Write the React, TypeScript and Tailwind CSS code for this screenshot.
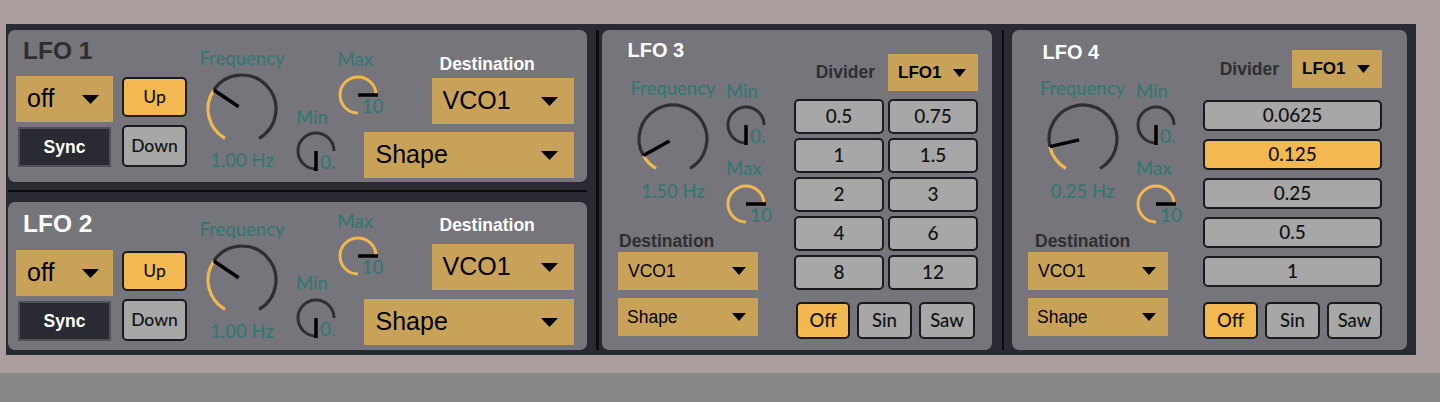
import React from "react";

const ORANGE = "#f2b84e";
const DARK = "#2f2f31";

function pt(cx: number, cy: number, r: number, deg: number) {
  const a = (deg * Math.PI) / 180;
  return [cx + r * Math.sin(a), cy - r * Math.cos(a)];
}

function arcPath(cx: number, cy: number, r: number, a0: number, a1: number) {
  const [x0, y0] = pt(cx, cy, r, a0);
  const [x1, y1] = pt(cx, cy, r, a1);
  const large = a1 - a0 > 180 ? 1 : 0;
  return `M ${x0} ${y0} A ${r} ${r} 0 ${large} 1 ${x1} ${y1}`;
}

// big frequency dial, 300 degree sweep
const BigKnob = ({ value }: { value: number }) => {
  const v = -150 + 300 * value;
  const [nx0, ny0] = pt(40, 40, 4, v);
  const [nx1, ny1] = pt(40, 40, 34, v);
  return (
    <svg width="80" height="80" viewBox="0 0 80 80" className="block">
      <path d={arcPath(40, 40, 34, v, 150)} fill="none" stroke={DARK} strokeWidth="3.2" />
      <path d={arcPath(40, 40, 34, -150, v)} fill="none" stroke={ORANGE} strokeWidth="3.2" />
      <line x1={nx0} y1={ny0} x2={nx1} y2={ny1} stroke="#000" strokeWidth="3.5" />
    </svg>
  );
};

// min / max dial, 270 degree sweep starting at the bottom
const SmallKnob = ({ value, text }: { value: number; text: string }) => {
  const v = 180 + 270 * value;
  const [nx, ny] = pt(20, 20, 20, v);
  return (
    <div className="relative h-[40px] w-[40px]">
      <svg width="40" height="40" viewBox="0 0 40 40" className="block overflow-visible">
        {value < 1 && <path d={arcPath(20, 20, 18, v, 450)} fill="none" stroke={DARK} strokeWidth="3" />}
        {value > 0 && <path d={arcPath(20, 20, 18, 180, v)} fill="none" stroke={ORANGE} strokeWidth="3" />}
        <line x1={20} y1={20} x2={nx} y2={ny} stroke="#000" strokeWidth="3.5" />
      </svg>
      <span className="absolute left-[24px] top-[21px] font-['Lato',sans-serif] text-[19px] font-medium leading-[19px] text-[#347873]">
        {text}
      </span>
    </div>
  );
};

const Tri = ({ w, h }: { w: number; h: number }) => (
  <svg width={w} height={h} viewBox={`0 0 ${w} ${h}`} className="block shrink-0">
    <polygon points={`0,0 ${w},0 ${w / 2},${h}`} fill="#000" />
  </svg>
);

const Dropdown = ({
  label,
  className,
  textClass,
  tw,
  th,
}: {
  label: string;
  className: string;
  textClass: string;
  tw: number;
  th: number;
}) => (
  <div className={`flex items-center justify-between bg-[#c9a25a] ${className}`}>
    <span className={`font-['Liberation_Sans',Arial,sans-serif] text-black ${textClass}`}>{label}</span>
    <Tri w={tw} h={th} />
  </div>
);

const Btn = ({ children, on, className }: { children: React.ReactNode; on?: boolean; className: string }) => (
  <div
    className={`flex items-center justify-center rounded-[5px] border-2 border-[#1b1b1d] font-['Lato',sans-serif] font-medium text-[#111] ${
      on ? "bg-[#f3b84f]" : "bg-[#a7a7a7]"
    } ${className}`}
  >
    {children}
  </div>
);

const Teal = ({ children, className }: { children: React.ReactNode; className?: string }) => (
  <div className={`font-['Lato',sans-serif] text-[18.5px] font-medium whitespace-nowrap text-[#347873] ${className ?? ""}`}>
    {children}
  </div>
);

const SmallLfo = ({ n, second }: { n: number; second?: boolean }) => (
  <div className={`flex items-start rounded-[7px] bg-[#76757b] pl-[8px] ${second ? "h-[148px]" : "h-[152px]"}`}>
    <div className={`flex w-[171px] flex-col ${second ? "pt-[10px]" : "pt-[9px]"}`}>
      <div
        className={`pl-[7px] font-['Liberation_Sans',Arial,sans-serif] text-[24.5px] font-bold leading-[24px] ${
          second ? "text-white" : "text-[#2e2e2e]"
        }`}
      >
        LFO {n}
      </div>
      <div className={`flex gap-[9px] ${second ? "mt-[14px]" : "mt-[13px]"}`}>
        <div className="flex w-[97px] flex-col">
          <Dropdown label="off" className="h-[46px] w-[97px] pl-[11px] pr-[14px]" textClass="text-[25px]" tw={17} th={9} />
          <div className="mt-[5px] ml-[2px] flex h-[40px] w-[93px] items-center justify-center border-2 border-[#505057] bg-[#2a2a33] font-['Liberation_Sans',Arial,sans-serif] text-[17.5px] font-bold text-white">
            Sync
          </div>
        </div>
        <div className="flex w-[65px] flex-col pt-[1px]">
          <Btn on className="h-[40px] text-[17.5px]">
            Up
          </Btn>
          <Btn className="mt-[8px] h-[42px] text-[17.5px]">Down</Btn>
        </div>
      </div>
    </div>
    <div className={`ml-[10px] flex w-[90px] flex-col items-center ${second ? "pt-[16px]" : "pt-[17px]"}`}>
      <Teal className="leading-[22px]">Frequency</Teal>
      <BigKnob value={0.313} />
      <Teal className="leading-[22px]">1.00 Hz</Teal>
    </div>
    <div className="ml-[9px] flex items-start">
      <div className={`flex w-[40px] flex-col ${second ? "pt-[70px]" : "pt-[76px]"}`}>
        <Teal className="leading-[22px]">Min</Teal>
        <div className={second ? "mt-[4px]" : "mt-[3px]"}>
          <SmallKnob value={0} text="0." />
        </div>
      </div>
      <div className={`ml-[1.5px] flex w-[40px] flex-col ${second ? "pt-[8px]" : "pt-[18px]"}`}>
        <Teal className="leading-[22px]">Max</Teal>
        <div className={second ? "mt-[4px]" : "mt-[5px]"}>
          <SmallKnob value={1} text="10" />
        </div>
      </div>
      <div className={`-ml-[14px] flex w-[210px] flex-col items-end ${second ? "pt-[13px]" : "pt-[24px]"}`}>
        <div className="w-[142px] pl-[8px] font-['Liberation_Sans',Arial,sans-serif] text-[17.5px] font-bold leading-[20px] text-white">
          Destination
        </div>
        <Dropdown
          label="VCO1"
          className={`h-[46px] w-[142px] pl-[11px] pr-[16px] ${second ? "mt-[9px]" : "mt-[4px]"}`}
          textClass="text-[25px]"
          tw={17}
          th={9}
        />
        <Dropdown
          label="Shape"
          className={`h-[46px] w-[210px] pl-[12px] pr-[16px] ${second ? "mt-[9px]" : "mt-[8px]"}`}
          textClass="text-[25px]"
          tw={17}
          th={9}
        />
      </div>
    </div>
  </div>
);

const BigLfo = ({ n, knob, hz }: { n: number; knob: number; hz: string }) => {
  const four = n === 4;
  return (
    <div className={`flex h-[320px] items-start rounded-[7px] bg-[#76757b] pl-[16px] ${four ? "w-[395px]" : "w-[390px]"}`}>
      <div className={`flex w-[148px] flex-col ${four ? "pt-[12px]" : "pt-[10px]"}`}>
        <div
          className={`font-['Liberation_Sans',Arial,sans-serif] text-[20px] font-bold leading-[20px] text-white ${
            four ? "ml-[14.5px]" : "ml-[9.5px]"
          }`}
        >
          LFO {n}
        </div>
        <div className={`flex items-start ${four ? "mt-[16px]" : "mt-[18px]"}`}>
          <div className="ml-[10px] flex w-[90px] flex-col items-center">
            <Teal className="leading-[21px]">Frequency</Teal>
            <BigKnob value={knob} />
            <Teal className="mt-[1px] leading-[22px]">{hz}</Teal>
          </div>
          <div className={`flex w-[40px] flex-col pt-[2px] ${four ? "ml-[9px]" : "ml-[8px]"}`}>
            <Teal className="leading-[22px]">Min</Teal>
            <div className="mt-[3px]">
              <SmallKnob value={0} text="0." />
            </div>
            <Teal className="mt-[12px] leading-[22px]">Max</Teal>
            <div className="mt-[5px]">
              <SmallKnob value={1} text="10" />
            </div>
          </div>
        </div>
        <div
          className={`mt-[7px] font-['Liberation_Sans',Arial,sans-serif] text-[17.5px] font-bold leading-[20px] text-[#2e2e33] ${
            four ? "ml-[7px]" : "ml-[1px]"
          }`}
        >
          Destination
        </div>
        <Dropdown label="VCO1" className="mt-[1px] h-[38px] w-[140px] pl-[10px] pr-[12px]" textClass="text-[17.5px]" tw={14} th={8} />
        <Dropdown label="Shape" className="mt-[8px] h-[38px] w-[140px] pl-[9px] pr-[12px]" textClass="text-[17.5px]" tw={14} th={8} />
      </div>
      {four ? (
        <div className="ml-[27px] flex w-[179px] flex-col pt-[20px]">
          <div className="flex h-[38px] items-center justify-end">
            <span className="mr-[13px] font-['Liberation_Sans',Arial,sans-serif] text-[17.5px] font-bold text-[#2e2e33]">Divider</span>
            <Dropdown label="LFO1" className="h-[38px] w-[90px] pl-[10px] pr-[12px]" textClass="text-[17px] font-bold" tw={13} th={8} />
          </div>
          <div className="mt-[12px] flex flex-col gap-[8px]">
            {["0.0625", "0.125", "0.25", "0.5", "1"].map((d) => (
              <Btn key={d} on={d === "0.125"} className="h-[31px] text-[19px]">
                {d}
              </Btn>
            ))}
          </div>
          <div className="mt-[15px] flex gap-[7px]">
            <Btn on className="h-[37px] w-[55px] text-[18.5px]">
              Off
            </Btn>
            <Btn className="h-[37px] w-[55px] text-[18.5px]">Sin</Btn>
            <Btn className="h-[37px] w-[55px] text-[18.5px]">Saw</Btn>
          </div>
        </div>
      ) : (
        <div className="ml-[28px] flex w-[184px] flex-col pt-[24px]">
          <div className="flex h-[37px] items-center justify-end">
            <span className="mr-[13px] font-['Liberation_Sans',Arial,sans-serif] text-[17.5px] font-bold text-[#2e2e33]">Divider</span>
            <Dropdown label="LFO1" className="h-[37px] w-[90px] pl-[10px] pr-[12px]" textClass="text-[17px] font-bold" tw={13} th={8} />
          </div>
          <div className="mt-[8px] grid grid-cols-2 gap-[4px]">
            {["0.5", "0.75", "1", "1.5", "2", "3", "4", "6", "8", "12"].map((d) => (
              <Btn key={d} className="h-[35px] text-[19px]">
                {d}
              </Btn>
            ))}
          </div>
          <div className="mt-[12px] flex gap-[7px] pl-[2px]">
            <Btn on className="h-[37px] w-[54px] text-[18.5px]">
              Off
            </Btn>
            <Btn className="h-[37px] w-[55px] text-[18.5px]">Sin</Btn>
            <Btn className="h-[37px] w-[56px] text-[18.5px]">Saw</Btn>
          </div>
        </div>
      )}
    </div>
  );
};

export default function App() {
  return (
    <div className="flex h-[402px] w-[1440px] flex-col overflow-hidden bg-[#ad9e9e] font-['Liberation_Sans',Arial,sans-serif]">
      <div className="h-[24px] shrink-0" />
      <div className="ml-[6px] flex h-[331px] w-[1410px] shrink-0 bg-[#2a2a33] pl-[2px] pt-[6px]">
        <div className="flex w-[579px] flex-col">
          <SmallLfo n={1} />
          <div className="mt-[8px] h-[2px] bg-[#0c0c0e]" />
          <div className="h-[10px]" />
          <SmallLfo n={2} second />
        </div>
        <div className="ml-[9px] h-[320px] w-[3px] bg-[#0c0c0e]" />
        <div className="ml-[3px]">
          <BigLfo n={3} knob={0.103} hz="1.50 Hz" />
        </div>
        <div className="ml-[10px] h-[320px] w-[2px] bg-[#0c0c0e]" />
        <div className="ml-[8px]">
          <BigLfo n={4} knob={0.157} hz="0.25 Hz" />
        </div>
      </div>
      <div className="h-[18px] shrink-0" />
      <div className="flex-1 bg-[#878787]" />
    </div>
  );
}
